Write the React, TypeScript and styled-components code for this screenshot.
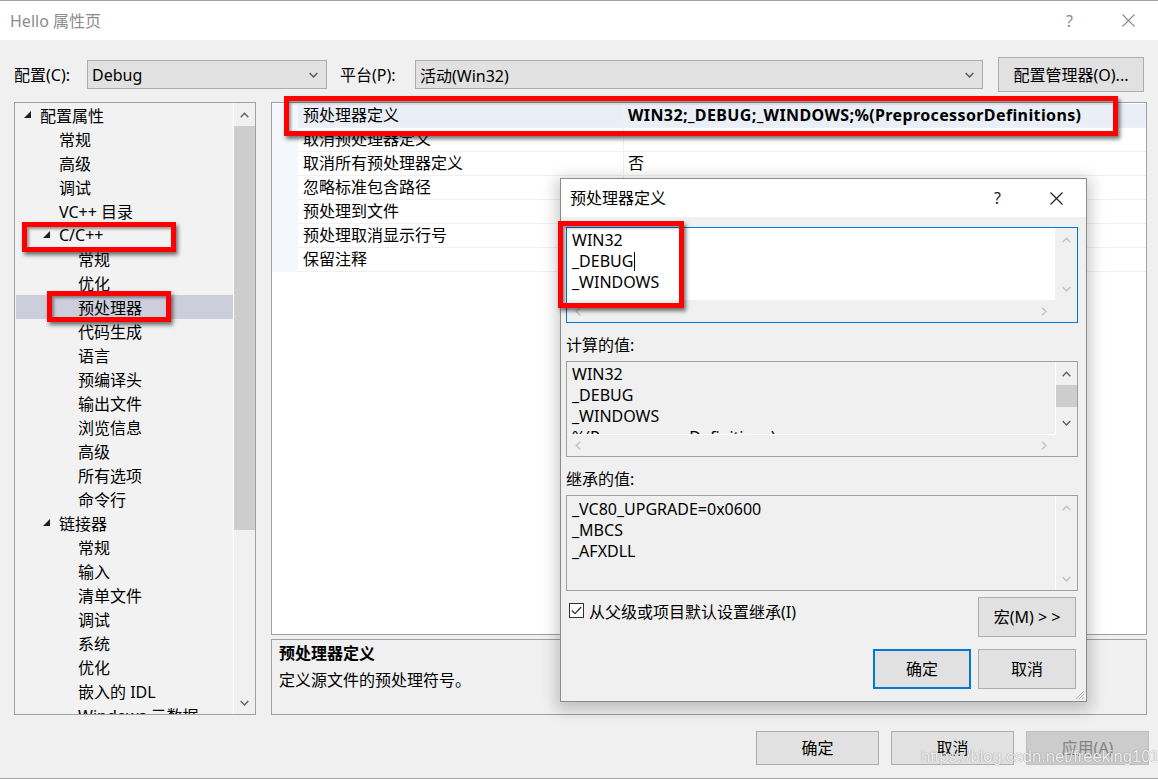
import styled, { createGlobalStyle } from 'styled-components';

// ─── Globals ──────────────────────────────────────────────────────────────────

const FONT = `"Noto Sans", "Noto Sans CJK SC", sans-serif`;

const GlobalStyle = createGlobalStyle`
  * { box-sizing: border-box; }
  html, body { margin: 0; padding: 0; background: #f0f0f0; }
  body {
    font-family: ${FONT};
    font-size: 16px;
    color: #000;
    overflow: hidden;
  }
  #root { width: 1158px; height: 779px; }
`;

// ─── Window frame ─────────────────────────────────────────────────────────────

const Window = styled.div`
  position: relative;
  width: 1158px;
  height: 779px;
  display: flex;
  flex-direction: column;
  background: #f0f0f0;
  border-top: 1px solid #9ea3b0;
  border-bottom: 1px solid #a8a8a8;
  overflow: hidden;
`;

const TitleBar = styled.div`
  flex: none;
  height: 39px;
  display: flex;
  align-items: center;
  background: #fff;
  padding-left: 10px;
`;

const TitleText = styled.div<{ $muted?: boolean }>`
  flex: 1;
  line-height: 24px;
  color: ${({ $muted }) => ($muted ? '#8c8c8c' : '#000')};
`;

const CaptionButton = styled.div<{ $muted?: boolean }>`
  width: 59px;
  height: 100%;
  display: flex;
  align-items: center;
  justify-content: center;
  font-size: 16px;
  color: ${({ $muted }) => ($muted ? '#8c8c8c' : '#1a1a1a')};
`;

// ─── Toolbar (配置 / 平台) ─────────────────────────────────────────────────────

const Toolbar = styled.div`
  flex: none;
  margin-top: 17px;
  height: 35px;
  display: flex;
  align-items: center;
  padding-left: 14px;
`;

const FieldLabel = styled.div<{ $w: number; $ml?: number }>`
  width: ${({ $w }) => $w}px;
  margin-left: ${({ $ml }) => $ml ?? 0}px;
  line-height: 24px;
`;

const Select = styled.div<{ $w: number }>`
  width: ${({ $w }) => $w}px;
  height: 29px;
  display: flex;
  align-items: center;
  justify-content: space-between;
  padding: 0 8px 0 4px;
  background: #e1e1e1;
  border: 1px solid #adadad;
`;

const PushButton = styled.div<{ $w: number; $h: number; $disabled?: boolean; $primary?: boolean }>`
  width: ${({ $w }) => $w}px;
  height: ${({ $h }) => $h}px;
  flex: none;
  display: flex;
  align-items: center;
  justify-content: center;
  background: ${({ $disabled }) => ($disabled ? '#cccccc' : '#e1e1e1')};
  border: ${({ $primary, $disabled }) =>
    $primary ? '2px solid #0078d7' : `1px solid ${$disabled ? '#bfbfbf' : '#adadad'}`};
  color: ${({ $disabled }) => ($disabled ? '#838383' : '#000')};
  line-height: 24px;
`;

const ManagerButton = styled(PushButton)`
  margin-left: 15px;
`;

// ─── Main body ────────────────────────────────────────────────────────────────

const Body = styled.div`
  flex: none;
  margin-top: 10px;
  height: 613px;
  display: flex;
  gap: 15px;
  padding-left: 14px;
`;

const Tree = styled.div`
  width: 242px;
  height: 100%;
  display: flex;
  border: 1px solid #a0a0a0;
  background: #f2f2f2;
`;

const TreeRows = styled.div`
  flex: 1;
  padding: 0 0 0 1px;
  overflow: hidden;
`;

const TreeRow = styled.div<{ $level: number; $selected?: boolean }>`
  position: relative;
  height: 24px;
  display: flex;
  align-items: center;
  padding-left: ${({ $level }) => 8 + $level * 19}px;
  background: ${({ $selected }) => ($selected ? '#cccedb' : 'transparent')};
  white-space: nowrap;
`;

const Twisty = styled.span`
  width: 16px;
  flex: none;
  display: flex;
  align-items: center;
  padding-bottom: 1px;
`;

const VScroll = styled.div<{ $w: number; $sep?: boolean }>`
  width: ${({ $w }) => $w}px;
  flex: none;
  display: flex;
  flex-direction: column;
  background: #f0f0f0;
  border-left: ${({ $sep }) => ($sep ? '1px solid #fff' : 'none')};
`;

const ArrowCell = styled.div`
  height: 23px;
  flex: none;
  display: flex;
  align-items: center;
  justify-content: center;
`;

const Thumb = styled.div<{ $h: number }>`
  height: ${({ $h }) => $h}px;
  flex: none;
  background: #cdcdcd;
`;

const Track = styled.div`
  flex: 1;
`;

const RightColumn = styled.div`
  width: 876px;
  display: flex;
  flex-direction: column;
`;

const PropGrid = styled.div`
  position: relative;
  height: 533px;
  flex: none;
  border: 1px solid #a0a0a0;
  background: #fff;
  padding-top: 1px;
`;

const GridRow = styled.div<{ $selected?: boolean }>`
  position: relative;
  height: 24px;
  display: flex;
  background: ${({ $selected }) => ($selected ? '#eaeef6' : 'transparent')};
`;

const Gutter = styled.div`
  width: 26px;
  flex: none;
  background: #f4f7fc;
`;

const NameCell = styled.div`
  width: 326px;
  flex: none;
  padding-left: 5px;
  line-height: 22px;
  border-bottom: 1px solid #eef0f4;
  border-right: 1px solid #eef0f4;
  white-space: nowrap;
`;

const ValueCell = styled.div<{ $bold?: boolean }>`
  flex: 1;
  padding-left: 4px;
  line-height: 22px;
  border-bottom: 1px solid #eef0f4;
  font-weight: ${({ $bold }) => ($bold ? 700 : 400)};
  letter-spacing: ${({ $bold }) => ($bold ? '0.38px' : 'normal')};
  white-space: nowrap;
`;

const DescPanel = styled.div`
  margin-top: 4px;
  height: 76px;
  flex: none;
  border: 1px solid #a0a0a0;
  padding: 1px 7px;
`;

const DescTitle = styled.div`
  font-weight: 700;
  line-height: 24px;
  margin-bottom: 3px;
`;

const DescText = styled.div`
  line-height: 24px;
`;

const Footer = styled.div`
  flex: none;
  margin-top: 16px;
  display: flex;
  justify-content: flex-end;
  gap: 12px;
  padding-right: 9px;
`;

const Watermark = styled.div`
  position: absolute;
  left: 921px;
  top: 745px;
  font-family: "Liberation Sans", Arial, sans-serif;
  font-size: 16.5px;
  line-height: 20px;
  color: rgba(255, 255, 255, 0.9);
  text-shadow: 0 0 1px rgba(0, 0, 0, 0.5);
  pointer-events: none;
`;

// ─── Red annotation boxes ─────────────────────────────────────────────────────

const Mark = styled.div<{ $x: number; $y: number; $w: number; $h: number }>`
  position: absolute;
  left: ${({ $x }) => $x}px;
  top: ${({ $y }) => $y}px;
  width: ${({ $w }) => $w}px;
  height: ${({ $h }) => $h}px;
  border: 5px solid #ff0000;
  box-shadow: 2px 3px 4px rgba(0, 0, 0, 0.55), inset 2px 2px 3px rgba(0, 0, 0, 0.4);
  pointer-events: none;
  z-index: 5;
`;

// ─── Modal dialog ─────────────────────────────────────────────────────────────

const Dialog = styled.div`
  position: absolute;
  left: 560px;
  top: 177px;
  width: 527px;
  height: 524px;
  display: flex;
  flex-direction: column;
  background: #f0f0f0;
  border: 1px solid #8a8a8a;
  box-shadow: 0 4px 14px 4px rgba(0, 0, 0, 0.2);
  z-index: 10;
`;

const DialogTitle = styled.div`
  flex: none;
  height: 38px;
  display: flex;
  align-items: center;
  background: #fff;
  padding-left: 9px;
`;

const DialogBody = styled.div`
  flex: 1;
  display: flex;
  flex-direction: column;
  padding: 10px 8px 0 5px;
`;

const ListBox = styled.div<{ $focus?: boolean; $rows: string }>`
  position: relative;
  height: 96px;
  flex: none;
  display: grid;
  grid-template-columns: 1fr 22px;
  grid-template-rows: ${({ $rows }) => $rows};
  border: 1px solid ${({ $focus }) => ($focus ? '#0078d7' : '#a0a0a0')};
  background: #f0f0f0;
`;

const ListText = styled.div<{ $white?: boolean; $pt: number }>`
  overflow: hidden;
  padding: ${({ $pt }) => $pt}px 0 0 5px;
  background: ${({ $white }) => ($white ? '#fff' : 'transparent')};
  line-height: 21px;
  white-space: pre;
`;

const Caret = styled.span`
  display: inline-block;
  width: 1px;
  height: 19px;
  margin-left: 1px;
  background: #000;
  vertical-align: -4px;
`;

const HScroll = styled.div<{ $sep?: boolean }>`
  display: flex;
  align-items: center;
  justify-content: space-between;
  padding: 0 8px 0 8px;
  border-top: ${({ $sep }) => ($sep ? '1px solid #fff' : 'none')};
`;

const Corner = styled.div``;

const SectionLabel = styled.div`
  margin-top: 10px;
  margin-bottom: 4px;
  line-height: 24px;
`;

const CheckRow = styled.div`
  margin-top: 6px;
  display: flex;
  justify-content: space-between;
  align-items: flex-start;
  padding-right: 2px;
`;

const CheckGroup = styled.div`
  display: flex;
  align-items: flex-start;
`;

const CheckBox = styled.div`
  width: 15px;
  height: 15px;
  margin: 6px 0 0 3px;
  border: 1px solid #333;
  background: #fff;
  display: flex;
  align-items: center;
  justify-content: center;
`;

const CheckLabel = styled.div`
  margin: 3px 0 0 5px;
  line-height: 24px;
`;

const ButtonRow = styled.div`
  margin-top: 12px;
  display: flex;
  justify-content: flex-end;
  gap: 7px;
  padding-right: 2px;
`;

const Grip = styled.svg`
  position: absolute;
  right: 1px;
  bottom: 1px;
`;

// ─── Small drawings ───────────────────────────────────────────────────────────

type Dir = 'up' | 'down' | 'left' | 'right';

function Chevron({ dir, color = '#606060' }: { dir: Dir; color?: string }) {
  const vertical = dir === 'up' || dir === 'down';
  const pts = {
    up: '0.7,5.2 4.5,1.2 8.3,5.2',
    down: '0.7,1 4.5,5 8.3,1',
    left: '5.2,0.7 1.2,4.5 5.2,8.3',
    right: '1,0.7 5,4.5 1,8.3',
  }[dir];
  return (
    <svg width={vertical ? 9 : 6} height={vertical ? 6 : 9} viewBox={vertical ? '0 0 9 6' : '0 0 6 9'}>
      <polyline points={pts} fill="none" stroke={color} strokeWidth={1.4} />
    </svg>
  );
}

function CloseGlyph({ color }: { color: string }) {
  return (
    <svg width="13" height="13" viewBox="0 0 13 13">
      <path d="M0.5 0.5 L12.5 12.5 M12.5 0.5 L0.5 12.5" stroke={color} strokeWidth={1.1} />
    </svg>
  );
}

function ExpandedGlyph() {
  return (
    <svg width="8" height="7" viewBox="0 0 8 7">
      <polygon points="7,0 7,7 0,7" fill="#1e1e1e" />
    </svg>
  );
}

// ─── Data ─────────────────────────────────────────────────────────────────────

type TreeItem = {
  label: string;
  level: number;
  open?: boolean;
  selected?: boolean;
  mark?: { x: number; y: number; w: number; h: number };
};

const treeItems: TreeItem[] = [
  { label: '配置属性', level: 0, open: true },
  { label: '常规', level: 1 },
  { label: '高级', level: 1 },
  { label: '调试', level: 1 },
  { label: 'VC++ 目录', level: 1 },
  { label: 'C/C++', level: 1, open: true, mark: { x: 6, y: -1, w: 154, h: 30 } },
  { label: '常规', level: 2 },
  { label: '优化', level: 2 },
  { label: '预处理器', level: 2, selected: true, mark: { x: 31, y: -4, w: 124, h: 31 } },
  { label: '代码生成', level: 2 },
  { label: '语言', level: 2 },
  { label: '预编译头', level: 2 },
  { label: '输出文件', level: 2 },
  { label: '浏览信息', level: 2 },
  { label: '高级', level: 2 },
  { label: '所有选项', level: 2 },
  { label: '命令行', level: 2 },
  { label: '链接器', level: 1, open: true },
  { label: '常规', level: 2 },
  { label: '输入', level: 2 },
  { label: '清单文件', level: 2 },
  { label: '调试', level: 2 },
  { label: '系统', level: 2 },
  { label: '优化', level: 2 },
  { label: '嵌入的 IDL', level: 2 },
  { label: 'Windows 元数据', level: 2 },
];

const gridRows = [
  { name: '预处理器定义', value: 'WIN32;_DEBUG;_WINDOWS;%(PreprocessorDefinitions)', bold: true, selected: true },
  { name: '取消预处理器定义', value: '' },
  { name: '取消所有预处理器定义', value: '否' },
  { name: '忽略标准包含路径', value: '' },
  { name: '预处理到文件', value: '' },
  { name: '预处理取消显示行号', value: '' },
  { name: '保留注释', value: '' },
];

// ─── Component ────────────────────────────────────────────────────────────────

export default function App() {
  return (
    <>
      <GlobalStyle />
      <Window>
        <TitleBar>
          <TitleText $muted>Hello 属性页</TitleText>
          <CaptionButton $muted>?</CaptionButton>
          <CaptionButton $muted>
            <CloseGlyph color="#8c8c8c" />
          </CaptionButton>
        </TitleBar>

        <Toolbar>
          <FieldLabel $w={73}>配置(C):</FieldLabel>
          <Select $w={240}>
            <span>Debug</span>
            <Chevron dir="down" color="#555" />
          </Select>
          <FieldLabel $w={75} $ml={13}>平台(P):</FieldLabel>
          <Select $w={568}>
            <span>活动(Win32)</span>
            <Chevron dir="down" color="#555" />
          </Select>
          <ManagerButton $w={146} $h={35}>配置管理器(O)...</ManagerButton>
        </Toolbar>

        <Body>
          <Tree>
            <TreeRows>
              {treeItems.map((item, i) => (
                <TreeRow key={i} $level={item.level} $selected={item.selected}>
                  <Twisty>{item.open && <ExpandedGlyph />}</Twisty>
                  {item.label}
                  {item.mark && <Mark $x={item.mark.x} $y={item.mark.y} $w={item.mark.w} $h={item.mark.h} />}
                </TreeRow>
              ))}
            </TreeRows>
            <VScroll $w={22} $sep>
              <ArrowCell>
                <Chevron dir="up" />
              </ArrowCell>
              <Thumb $h={404} />
              <Track />
              <ArrowCell>
                <Chevron dir="down" />
              </ArrowCell>
            </VScroll>
          </Tree>

          <RightColumn>
            <PropGrid>
              {gridRows.map((row, i) => (
                <GridRow key={i} $selected={row.selected}>
                  <Gutter />
                  <NameCell>{row.name}</NameCell>
                  <ValueCell $bold={row.bold}>{row.value}</ValueCell>
                  {i === 0 && <Mark $x={12} $y={-8} $w={834} $h={40} />}
                </GridRow>
              ))}
            </PropGrid>
            <DescPanel>
              <DescTitle>预处理器定义</DescTitle>
              <DescText>定义源文件的预处理符号。</DescText>
            </DescPanel>
          </RightColumn>
        </Body>

        <Footer>
          <PushButton $w={123} $h={34}>确定</PushButton>
          <PushButton $w={123} $h={34}>取消</PushButton>
          <PushButton $w={123} $h={34} $disabled>应用(A)</PushButton>
        </Footer>

        <Watermark>https://blog.csdn.net/freeking101</Watermark>

        <Dialog>
          <DialogTitle>
            <TitleText>预处理器定义</TitleText>
            <CaptionButton>?</CaptionButton>
            <CaptionButton>
              <CloseGlyph color="#1a1a1a" />
            </CaptionButton>
          </DialogTitle>

          <DialogBody>
            <ListBox $focus $rows="72px 22px">
              <ListText $white $pt={2}>
                {'WIN32\n_DEBUG'}
                <Caret />
                {'\n_WINDOWS'}
              </ListText>
              <VScroll $w={22}>
                <ArrowCell>
                  <Chevron dir="up" color="#c2c2c2" />
                </ArrowCell>
                <Track />
                <ArrowCell>
                  <Chevron dir="down" color="#c2c2c2" />
                </ArrowCell>
              </VScroll>
              <HScroll>
                <Chevron dir="left" color="#c2c2c2" />
                <Chevron dir="right" color="#c2c2c2" />
              </HScroll>
              <Corner />
              <Mark $x={-9} $y={-7} $w={126} $h={87} />
            </ListBox>

            <SectionLabel>计算的值:</SectionLabel>
            <ListBox $rows="72px 22px">
              <ListText $pt={2}>{'WIN32\n_DEBUG\n_WINDOWS\n%(PreprocessorDefinitions)'}</ListText>
              <VScroll $w={22} $sep>
                <ArrowCell>
                  <Chevron dir="up" />
                </ArrowCell>
                <Thumb $h={22} />
                <Track />
                <ArrowCell>
                  <Chevron dir="down" />
                </ArrowCell>
              </VScroll>
              <HScroll $sep>
                <Chevron dir="left" color="#c2c2c2" />
                <Chevron dir="right" color="#c2c2c2" />
              </HScroll>
              <Corner />
            </ListBox>

            <SectionLabel>继承的值:</SectionLabel>
            <ListBox $rows="94px">
              <ListText $pt={3}>{'_VC80_UPGRADE=0x0600\n_MBCS\n_AFXDLL'}</ListText>
              <VScroll $w={22} $sep>
                <ArrowCell>
                  <Chevron dir="up" color="#c2c2c2" />
                </ArrowCell>
                <Track />
                <ArrowCell>
                  <Chevron dir="down" color="#c2c2c2" />
                </ArrowCell>
              </VScroll>
            </ListBox>

            <CheckRow>
              <CheckGroup>
                <CheckBox>
                  <svg width="11" height="9" viewBox="0 0 11 9">
                    <polyline points="0.8,4.5 4,7.6 10.2,1" fill="none" stroke="#333" strokeWidth={1.3} />
                  </svg>
                </CheckBox>
                <CheckLabel>从父级或项目默认设置继承(I)</CheckLabel>
              </CheckGroup>
              <PushButton $w={98} $h={40}>宏(M) &gt; &gt;</PushButton>
            </CheckRow>

            <ButtonRow>
              <PushButton $w={98} $h={40} $primary>确定</PushButton>
              <PushButton $w={98} $h={40}>取消</PushButton>
            </ButtonRow>
          </DialogBody>

          <Grip width="11" height="11" viewBox="0 0 11 11">
            <path d="M10 2 L2 10 M10 5 L5 10 M10 8 L8 10" stroke="#b0b0b0" strokeWidth={1} />
          </Grip>
        </Dialog>
      </Window>
    </>
  );
}
